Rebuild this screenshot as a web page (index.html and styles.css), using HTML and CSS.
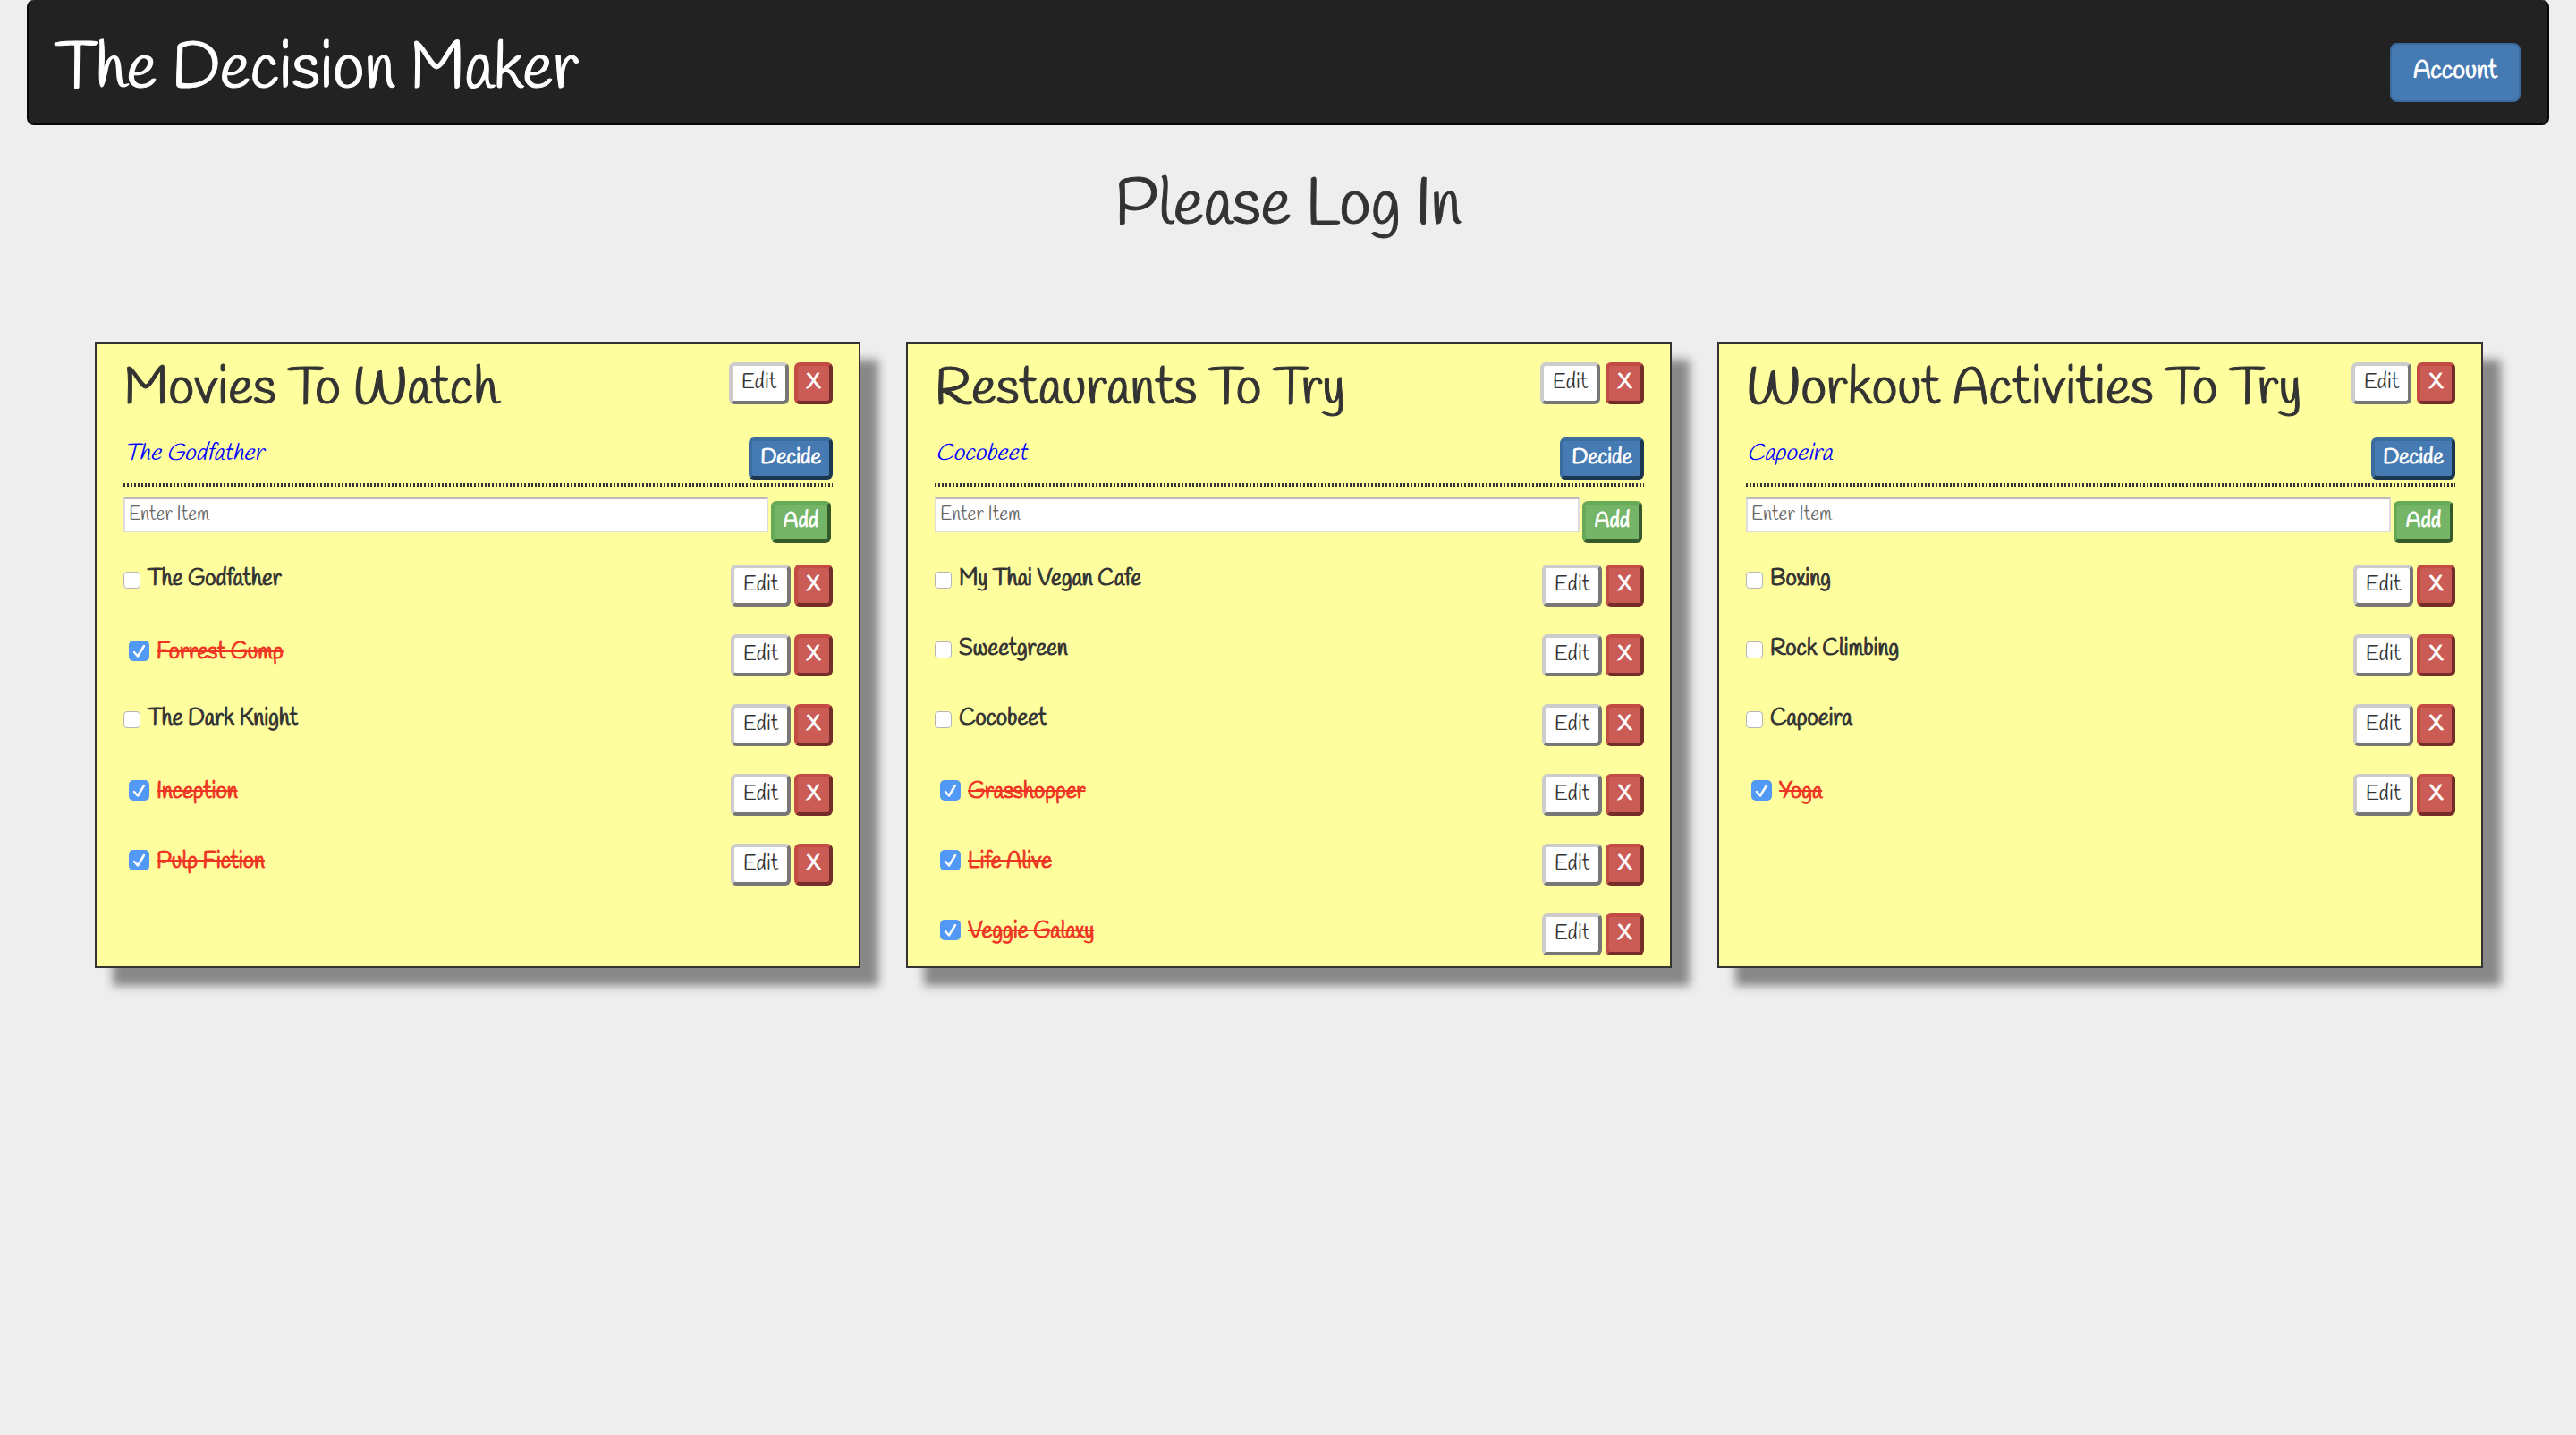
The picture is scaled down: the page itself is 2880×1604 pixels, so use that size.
FILE: index.html
```html
<!DOCTYPE html>
<html lang="en">
<head>
<meta charset="utf-8">
<title>The Decision Maker</title>
<link rel="stylesheet" href="styles.css">
</head>
<body>
<header class="navbar">
  <a class="brand" href="#">The Decision Maker</a>
  <button class="account" type="button">Account</button>
</header>
<main>
  <h1 class="greeting">Please Log In</h1>
  <div class="lists">
    <section class="card">
      <div class="card-head">
        <h2>Movies To Watch</h2>
        <button class="btn edit" type="button">Edit</button>
        <button class="btn remove" type="button">X</button>
      </div>
      <div class="decision">
        <p>The Godfather</p>
        <button class="btn decide" type="button">Decide</button>
      </div>
      <form class="add-form">
        <input type="text" placeholder="Enter Item" aria-label="Enter Item">
        <button class="btn add" type="button">Add</button>
      </form>
      <ul class="items">
        <li><label><input type="checkbox"><span>The Godfather</span></label><button class="btn edit" type="button">Edit</button><button class="btn remove" type="button">X</button></li>
        <li class="done"><label><input type="checkbox" checked><span>Forrest Gump</span></label><button class="btn edit" type="button">Edit</button><button class="btn remove" type="button">X</button></li>
        <li><label><input type="checkbox"><span>The Dark Knight</span></label><button class="btn edit" type="button">Edit</button><button class="btn remove" type="button">X</button></li>
        <li class="done"><label><input type="checkbox" checked><span>Inception</span></label><button class="btn edit" type="button">Edit</button><button class="btn remove" type="button">X</button></li>
        <li class="done"><label><input type="checkbox" checked><span>Pulp Fiction</span></label><button class="btn edit" type="button">Edit</button><button class="btn remove" type="button">X</button></li>
      </ul>
    </section>
    <section class="card">
      <div class="card-head">
        <h2>Restaurants To Try</h2>
        <button class="btn edit" type="button">Edit</button>
        <button class="btn remove" type="button">X</button>
      </div>
      <div class="decision">
        <p>Cocobeet</p>
        <button class="btn decide" type="button">Decide</button>
      </div>
      <form class="add-form">
        <input type="text" placeholder="Enter Item" aria-label="Enter Item">
        <button class="btn add" type="button">Add</button>
      </form>
      <ul class="items">
        <li><label><input type="checkbox"><span>My Thai Vegan Cafe</span></label><button class="btn edit" type="button">Edit</button><button class="btn remove" type="button">X</button></li>
        <li><label><input type="checkbox"><span>Sweetgreen</span></label><button class="btn edit" type="button">Edit</button><button class="btn remove" type="button">X</button></li>
        <li><label><input type="checkbox"><span>Cocobeet</span></label><button class="btn edit" type="button">Edit</button><button class="btn remove" type="button">X</button></li>
        <li class="done"><label><input type="checkbox" checked><span>Grasshopper</span></label><button class="btn edit" type="button">Edit</button><button class="btn remove" type="button">X</button></li>
        <li class="done"><label><input type="checkbox" checked><span>Life Alive</span></label><button class="btn edit" type="button">Edit</button><button class="btn remove" type="button">X</button></li>
        <li class="done"><label><input type="checkbox" checked><span>Veggie Galaxy</span></label><button class="btn edit" type="button">Edit</button><button class="btn remove" type="button">X</button></li>
      </ul>
    </section>
    <section class="card">
      <div class="card-head">
        <h2>Workout Activities To Try</h2>
        <button class="btn edit" type="button">Edit</button>
        <button class="btn remove" type="button">X</button>
      </div>
      <div class="decision">
        <p>Capoeira</p>
        <button class="btn decide" type="button">Decide</button>
      </div>
      <form class="add-form">
        <input type="text" placeholder="Enter Item" aria-label="Enter Item">
        <button class="btn add" type="button">Add</button>
      </form>
      <ul class="items">
        <li><label><input type="checkbox"><span>Boxing</span></label><button class="btn edit" type="button">Edit</button><button class="btn remove" type="button">X</button></li>
        <li><label><input type="checkbox"><span>Rock Climbing</span></label><button class="btn edit" type="button">Edit</button><button class="btn remove" type="button">X</button></li>
        <li><label><input type="checkbox"><span>Capoeira</span></label><button class="btn edit" type="button">Edit</button><button class="btn remove" type="button">X</button></li>
        <li class="done"><label><input type="checkbox" checked><span>Yoga</span></label><button class="btn edit" type="button">Edit</button><button class="btn remove" type="button">X</button></li>
      </ul>
    </section>
  </div>
</main>
</body>
</html>
```
FILE: styles.css
```css
* { box-sizing: border-box; }

body {
  margin: 0;
  background: #eee;
  color: #333;
  font-family: Handlee, Lato, sans-serif;
  font-size: 25px;
  line-height: 32px;
}

h1, h2, p, ul { margin: 0; padding: 0; font-weight: 400; }
ul { list-style: none; }
button, input { font-family: inherit; margin: 0; }

.navbar {
  display: flex;
  align-items: flex-start;
  justify-content: space-between;
  margin: 0 30px;
  padding: 38px 30px 18px;
  background: #222;
  border: 2px solid #080808;
  border-top: 0;
  border-radius: 8px;
}

.navbar, .greeting, .remove { -webkit-text-stroke: 1px; }

.brand {
  color: #fff;
  font-size: 72px;
  line-height: 82px;
  text-decoration: none;
}

.account {
  height: 66px;
  width: 146px;
  margin-top: 10px;
  padding: 0 0 4px;
  background: #467ab3;
  border: 2px solid #3b6c9f;
  border-radius: 8px;
  color: #fff;
  font-size: 28px;
}

.greeting {
  padding: 47px 0 107px;
  font-size: 72px;
  line-height: 88px;
  text-align: center;
}

.lists {
  display: grid;
  grid-template-columns: repeat(3, minmax(0, 1fr));
  gap: 51px;
  padding: 0 104px 60px 106px;
}

.card {
  padding: 21px 29px 12px 30px;
  background: #fffe9f;
  border: 2px solid #333;
  box-shadow: 20px 20px 10px #888;
}

.card-head {
  display: flex;
  align-items: flex-start;
  gap: 6px;
}

.card-head h2 {
  flex: 1;
  padding-top: 2px;
  font-size: 59px;
  line-height: 58px;
  white-space: nowrap;
}

.btn {
  flex: none;
  height: 47px;
  padding: 0 0 2px;
  border: 4px solid;
  border-radius: 6px;
  font-size: 24px;
  line-height: 30px;
  color: #fff;
}

.edit {
  width: 67px;
  background: #fff;
  border-color: #ccc #777 #777 #ccc;
  color: #333;
}

.remove {
  width: 43px;
  background: #ca5b55;
  border-color: #c34b43 #762d29 #762d29 #c34b43;
}

.decide {
  width: 94px;
  background: #467ab3;
  border-color: #3b6c9f #1d3650 #1d3650 #3b6c9f;
}

.add {
  width: 67px;
  background: #75b568;
  border-color: #66a957 #355b2d #355b2d #66a957;
}

.decide, .add, .card-head h2, .items label { -webkit-text-stroke: 1px; }

.decision {
  display: flex;
  align-items: flex-start;
  justify-content: space-between;
  margin-top: 24px;
  padding-bottom: 8px;
  background: repeating-linear-gradient(90deg, #333 0 2px, transparent 2px 4px) bottom / 100% 4px no-repeat;
}

.decision p {
  padding: 2px 0 0 1px;
  color: #0000ff;
  font-size: 26px;
  font-style: italic;
}

.add-form {
  display: flex;
  align-items: flex-start;
  gap: 3px;
  padding: 12px 2px 0 0;
}

.add-form input {
  flex: 1;
  min-width: 0;
  height: 39px;
  padding: 0 4px 2px;
  background: #fff;
  border: 2px solid #ddd;
  border-top-color: #bbb;
  font-size: 21px;
}

.add-form input::placeholder { color: #666; }
.add-form .btn { margin-top: 4px; }

.items { padding-top: 24px; }

.items li {
  display: flex;
  align-items: flex-start;
  gap: 4px;
  height: 78px;
}

.items li:last-child { height: 47px; }

.items label {
  display: flex;
  flex: 1;
  gap: 8px;
}

.items span { padding-top: 1px; }

.items input {
  flex: none;
  appearance: none;
  width: 19px;
  height: 19px;
  margin-top: 8px;
  background: #fff;
  border: 1px solid #b5b5b5;
  border-radius: 4px;
}

.done label { padding: 4px 0 0 6px; color: #ee3524; }
.done span { text-decoration: line-through; text-decoration-thickness: 2px; }

.items .done input {
  width: 23px;
  height: 23px;
  margin-top: 3px;
  border: 0;
  border-radius: 5px;
  background: #5199f5 url("data:image/svg+xml,%3Csvg xmlns='http://www.w3.org/2000/svg' viewBox='0 0 23 23'%3E%3Cpath d='M6 13l4 4.500L17 6' fill='none' stroke='white' stroke-width='2.500' stroke-linecap='round' stroke-linejoin='round'/%3E%3C/svg%3E") center / 100% no-repeat;
}
```
